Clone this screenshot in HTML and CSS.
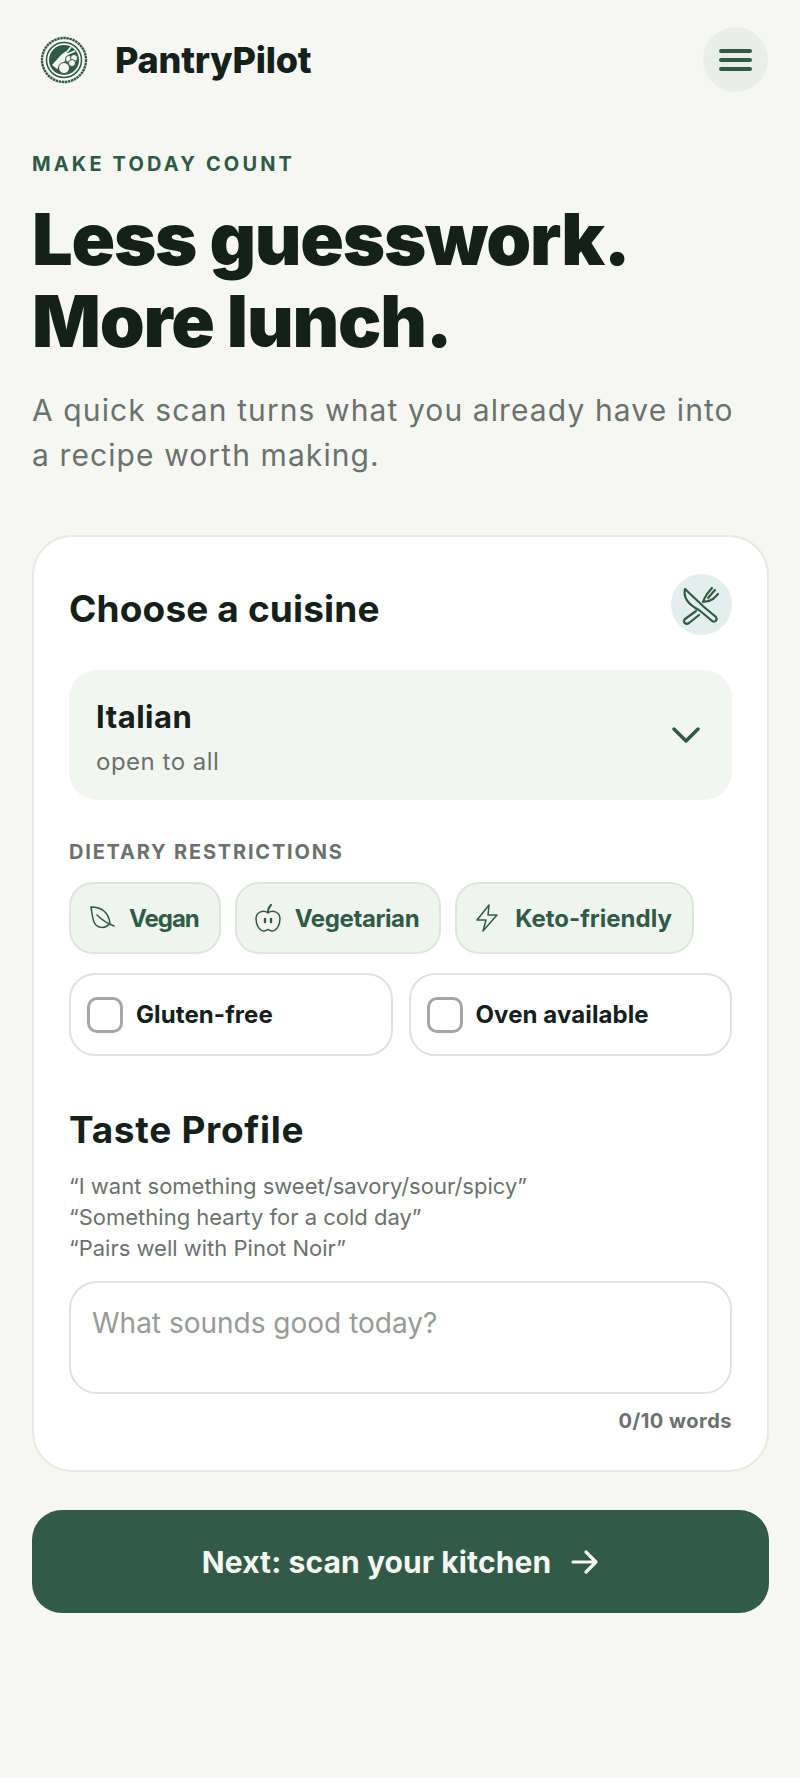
FILE: index.html
```html
<!DOCTYPE html>
<html lang="en">

<head>
    <meta charset="UTF-8">
    <meta name="viewport" content="width=device-width, initial-scale=1.0">
    <title>PantryPilot</title>
    <link rel="stylesheet" href="styles.css">
</head>

<body>
    <header class="top">
        <div class="brand">
            <svg class="logo" viewBox="0 0 48 48" fill="none">
                <circle cx="24" cy="24" r="22" stroke="#2f5a47" stroke-width="2.4" stroke-dasharray="2.500 .6"/>
                <circle cx="24" cy="24" r="17.500" stroke="#2f5a47" stroke-width="1.500"/>
                <circle cx="24" cy="24" r="15" fill="#2f5a47"/>
                <path d="M12 29 L21 19 L26 15 L29 19 L25 25 L17 33 Z" fill="#f6f7f3"/>
                <path d="M27 16 L31 11 M28 18 L35 15" stroke="#f6f7f3" stroke-width="1.800"/>
                <circle cx="29" cy="23" r="3.500" fill="#f6f7f3" stroke="#2f5a47"/>
                <circle cx="34" cy="22" r="3.500" fill="#f6f7f3" stroke="#2f5a47"/>
                <circle cx="32" cy="27" r="3.500" fill="#f6f7f3" stroke="#2f5a47"/>
                <circle cx="24" cy="32" r="5.500" fill="#f6f7f3" stroke="#2f5a47"/>
            </svg>
            <span class="brand-name">PantryPilot</span>
        </div>
        <button class="menu-btn" aria-label="Menu">
            <span></span><span></span><span></span>
        </button>
    </header>

    <main class="page">
        <p class="eyebrow">MAKE TODAY COUNT</p>
        <h1>Less guesswork.<br>More lunch.</h1>
        <p class="lead">A quick scan turns what you already have into a recipe worth making.</p>

        <section class="card">
            <div class="card-head">
                <h2>Choose a cuisine</h2>
                <span class="cutlery">
                    <svg viewBox="0 0 60 60" fill="none" stroke="#2f5a47" stroke-width="2.200" stroke-linecap="round" stroke-linejoin="round">
                        <path d="M13 14 L32 32 L44 42 C46 46 42 48 39 45 L27 35 C17 30 11 23 13 14 Z"/>
                        <path d="M24 36 L13 44 C10 47 14 50 17 48 L27 40"/>
                        <path d="M40 13 L35 19 C33 22 32 24 31 27 M46 19 L41 24 C38 26 35 27 31 27 M43 15 L36 23"/>
                    </svg>
                </span>
            </div>

            <div class="select">
                <div class="select-text">
                    <div class="select-value">Italian</div>
                    <div class="select-sub">open to all</div>
                </div>
                <svg class="chev" viewBox="0 0 28 18" fill="none" stroke="#2f5a47" stroke-width="3.500" stroke-linecap="round" stroke-linejoin="round">
                    <path d="M2 3 L14 15 L26 3"/>
                </svg>
            </div>

            <div class="label">DIETARY RESTRICTIONS</div>
            <div class="chips">
                <div class="chip chip-vegan">
                    <svg viewBox="0 0 28 28" fill="none" stroke="#2f5a47" stroke-width="1.500" stroke-linecap="round" stroke-linejoin="round">
                        <path d="M3 3 C12 3 20 7 22 19 C18 25 9 25 6 18 C4 13 4 8 3 3 Z"/>
                        <path d="M9 11 C13 15 18 19 26 22"/>
                    </svg>
                    Vegan
                </div>
                <div class="chip tight">
                    <svg viewBox="0 0 28 28" fill="none" stroke="#2f5a47" stroke-width="1.500" stroke-linecap="round" stroke-linejoin="round">
                        <path d="M14 9 C18 6 26 7 26 15 C26 22 22 27 18 27 C16 27 15 25.500 14 25.500 C13 25.500 12 27 10 27 C6 27 2 22 2 15 C2 7 10 6 14 9 Z"/>
                        <path d="M14 8 C14 5 15 3 17 1" stroke-width="2"/>
                        <path d="M11 15 V18 M17 15 V18" stroke-width="2.400"/>
                    </svg>
                    Vegetarian
                </div>
                <div class="chip">
                    <svg viewBox="0 0 28 28" fill="none" stroke="#2f5a47" stroke-width="1.500" stroke-linecap="round" stroke-linejoin="round">
                        <path d="M15 1 L3 16 H12 L9 27 L23 11 H14 L15 1 Z"/>
                    </svg>
                    Keto-friendly
                </div>
            </div>

            <div class="checks">
                <label class="check"><span class="box"></span>Gluten-free</label>
                <label class="check"><span class="box"></span>Oven available</label>
            </div>

            <h2 class="taste-title">Taste Profile</h2>
            <p class="hints">“I want something sweet/savory/sour/spicy”<br>“Something hearty for a cold day”<br>“Pairs well with Pinot Noir”</p>
            <div class="textbox">What sounds good today?</div>
            <div class="count">0/10 words</div>
        </section>

        <button class="next">
            Next: scan your kitchen
            <svg viewBox="0 0 28 26" fill="none" stroke="#f6f7f3" stroke-width="3.200" stroke-linecap="round" stroke-linejoin="round">
                <path d="M2 13 H25 M15 3 L25 13 L15 23"/>
            </svg>
        </button>
    </main>
</body>

</html>
```

FILE: styles.css
```css
* {
    margin: 0;
    padding: 0;
    box-sizing: border-box;
}

body {
    background: #f6f7f3;
    color: #14201a;
    font-family: "Inter", "Liberation Sans", sans-serif;
    height: 1778px;
    overflow: hidden;
}

.top {
    display: flex;
    justify-content: space-between;
    align-items: center;
    padding: 27px 32px 0 40px;
    height: 92px;
}

.brand {
    display: flex;
    align-items: center;
    gap: 27px;
}

.logo {
    width: 48px;
    height: 48px;
}

.brand-name {
    font-size: 36px;
    font-weight: 800;
    letter-spacing: -0.2px;
}

.menu-btn {
    width: 65px;
    height: 65px;
    border: 0;
    border-radius: 50%;
    background: #e9eeea;
    display: flex;
    flex-direction: column;
    align-items: center;
    justify-content: center;
    gap: 5px;
}

.menu-btn span {
    width: 33px;
    height: 4px;
    border-radius: 2px;
    background: #2f5a47;
}

.page {
    padding: 0 31px 0 32px;
}

.eyebrow {
    margin-top: 60px;
    font-size: 20px;
    line-height: 24px;
    font-weight: 700;
    letter-spacing: 3.150px;
    color: #2f5a47;
}

h1 {
    margin-top: 22px;
    font-size: 72px;
    line-height: 82px;
    font-weight: 900;
    letter-spacing: -1.2px;
}

.lead {
    margin-top: 26px;
    max-width: 716px;
    font-size: 30px;
    line-height: 45px;
    letter-spacing: 1.1px;
    color: #6b716d;
}

.card {
    margin-top: 57px;
    height: 937px;
    padding: 37px 35px;
    background: #fff;
    border: 2px solid #e8e9e3;
    border-radius: 40px;
}

.card-head {
    display: flex;
    justify-content: space-between;
    align-items: center;
}

h2 {
    margin-top: 8px;
    font-size: 37px;
    font-weight: 700;
    letter-spacing: 0.15px;
}

.cutlery {
    width: 61px;
    height: 61px;
    border-radius: 50%;
    background: #e3efec;
    display: flex;
    align-items: center;
    justify-content: center;
}

.cutlery svg {
    width: 60px;
    height: 60px;
}

.select {
    margin-top: 35px;
    height: 130px;
    padding: 0 32px 0 27px;
    background: #f3f5f0;
    border-radius: 28px;
    display: flex;
    justify-content: space-between;
    align-items: center;
}

.select-text {
    padding-top: 4px;
}

.select-value {
    font-size: 31px;
    font-weight: 700;
    letter-spacing: 0.5px;
}

.select-sub {
    margin-top: 12px;
    font-size: 24px;
    letter-spacing: 0.5px;
    color: #6b716d;
}

.chev {
    width: 28px;
    height: 18px;
}

.label {
    margin-top: 40px;
    font-size: 20px;
    line-height: 24px;
    font-weight: 700;
    letter-spacing: 1.8px;
    color: #6b716d;
}

.chips {
    margin-top: 18px;
    display: flex;
    gap: 14px;
}

.chip {
    height: 72px;
    padding: 0 20px 0 17px;
    display: flex;
    align-items: center;
    gap: 13px;
    background: #f0f4ef;
    border: 2px solid #e0e4de;
    border-radius: 24px;
    font-size: 24px;
    font-weight: 700;
    color: #2f5a47;
}

.chip.tight {
    letter-spacing: -0.4px;
}

.chip.chip-vegan {
    letter-spacing: -1px;
}

.chip svg {
    width: 28px;
    height: 28px;
}

.checks {
    margin-top: 19px;
    display: grid;
    grid-template-columns: 1fr 1fr;
    gap: 16px;
}

.check {
    height: 83px;
    padding: 0 16px;
    display: flex;
    align-items: center;
    gap: 13px;
    border: 2px solid #e0e2dd;
    border-radius: 26px;
    font-size: 24px;
    font-weight: 700;
    letter-spacing: 0.1px;
}

.box {
    width: 36px;
    height: 36px;
    border: 3px solid #a3a8a4;
    border-radius: 10px;
}

.taste-title {
    margin-top: 51px;
    letter-spacing: 0.7px;
}

.hints {
    margin-top: 19px;
    font-size: 22px;
    line-height: 31px;
    color: #6b716d;
}

.textbox {
    margin-top: 17px;
    height: 113px;
    padding: 23px 21px;
    border: 2px solid #e0e2dd;
    border-radius: 28px;
    font-size: 28px;
    color: #979b98;
}

.count {
    margin-top: 15px;
    font-size: 20px;
    font-weight: 700;
    letter-spacing: 0.5px;
    text-align: right;
    color: #6b716d;
}

.next {
    margin-top: 38px;
    width: 100%;
    height: 103px;
    border: 0;
    border-radius: 30px;
    background: #315b48;
    color: #f6f7f3;
    font-family: inherit;
    font-size: 30px;
    font-weight: 700;
    letter-spacing: 0.1px;
    display: flex;
    align-items: center;
    justify-content: center;
    gap: 20px;
}

.next svg {
    width: 28px;
    height: 26px;
}
```
